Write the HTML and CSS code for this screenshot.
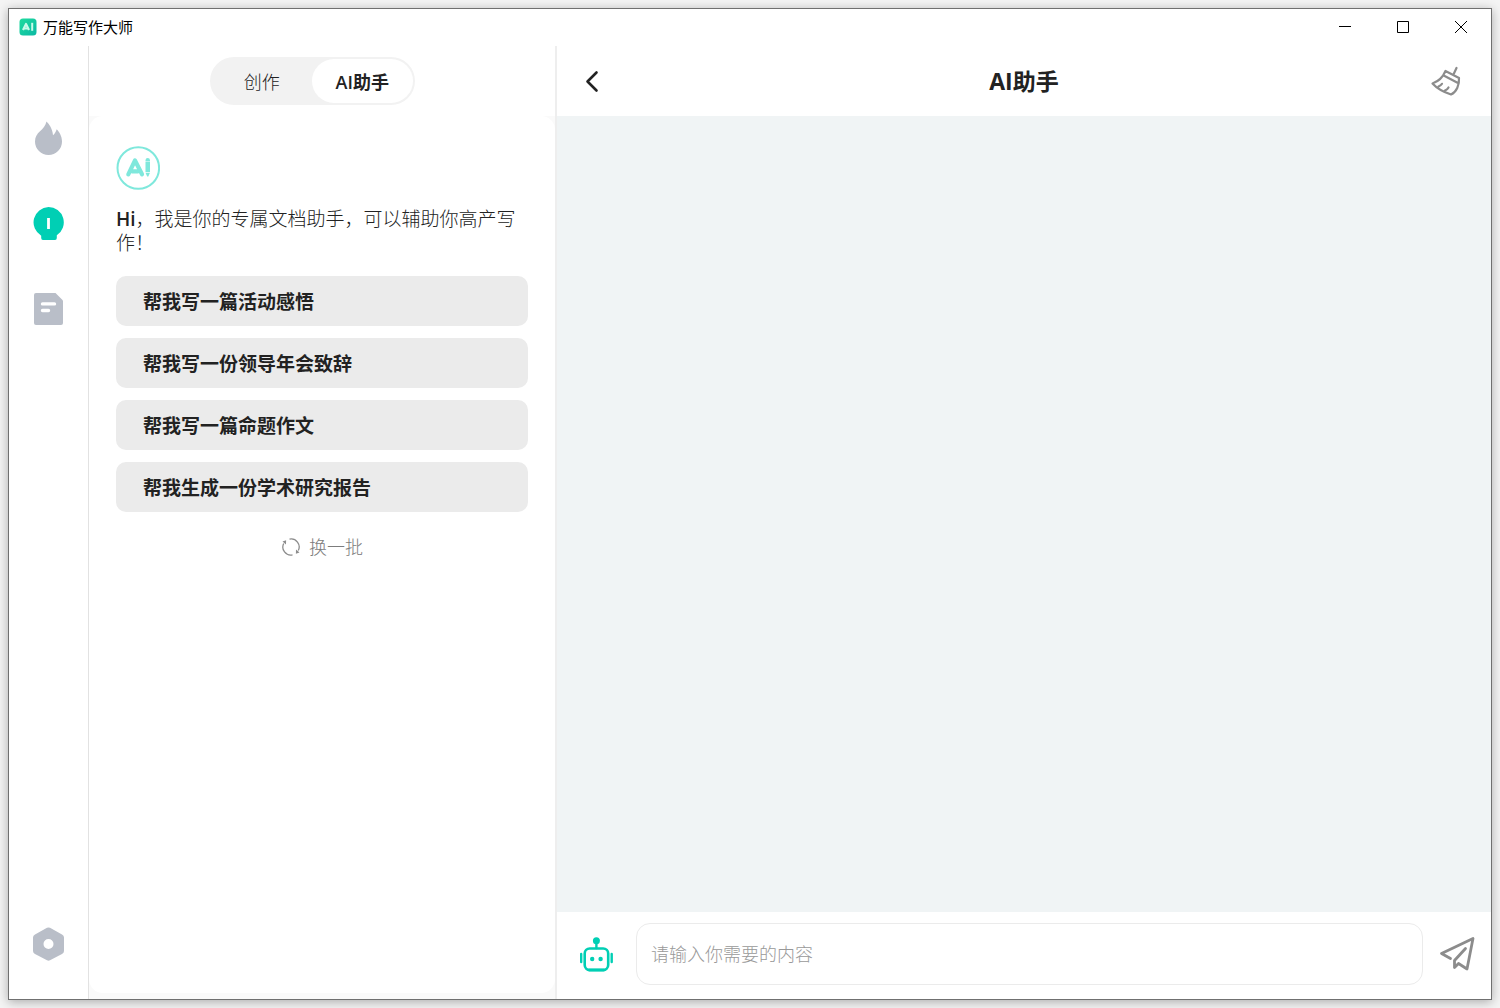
FILE: index.html
```html
<!DOCTYPE html>
<html lang="zh-CN">
<head>
<meta charset="utf-8">
<title>万能写作大师</title>
<link rel="stylesheet" href="styles.css">
</head>
<body>
<div class="window">
  <header class="titlebar">
    <svg class="app-logo" viewBox="0 0 18 18" width="18" height="18" aria-hidden="true">
      <defs><linearGradient id="logo" x1="0" y1="0" x2="1" y2="1"><stop offset="0" stop-color="#1fdc9e"/><stop offset="1" stop-color="#0bb8a4"/></linearGradient></defs>
      <rect x="0.5" y="0.5" width="17" height="17" rx="3.5" fill="url(#logo)"/>
      <path d="M4 12L7 6L10 12M5.500 10.500H9" fill="none" stroke="#c9fbea" stroke-width="2.200" stroke-linejoin="round"/>
      <path d="M13.200 4.800V12.800" stroke="#c9fbea" stroke-width="2"/>
    </svg>
    <h1 class="app-name">万能写作大师</h1>
    <div class="window-controls">
      <button class="window-btn" type="button" aria-label="最小化"><svg viewBox="0 0 12 12" width="12" height="12"><path d="M0 5.500H12"/></svg></button>
      <button class="window-btn" type="button" aria-label="最大化"><svg viewBox="0 0 12 12" width="12" height="12"><path d="M.5.500H11.500V11.500H.5Z"/></svg></button>
      <button class="window-btn" type="button" aria-label="关闭"><svg viewBox="0 0 12 12" width="12" height="12"><path d="M0 0L12 12M12 0L0 12"/></svg></button>
    </div>
  </header>

  <div class="workspace">
    <nav class="sidebar">
      <button class="nav-btn" type="button" aria-label="热门">
        <svg viewBox="0 0 32 34" width="32" height="34"><path fill="#b9bec8" d="M13.500 .5C15.600 2.500 19.500 7.500 20 14.300C22 12.800 22.800 10.500 23.700 8.300C26.200 11 29 15 29 20.500A13.400 13.400 0 0 1 2 20.500C2 16 4 13 7 10.300C10 7.500 12.400 5 13.500 .5Z"/></svg>
      </button>
      <button class="nav-btn" type="button" aria-label="AI助手" aria-current="page">
        <svg viewBox="0 0 32 34" width="32" height="34"><path fill="#00cfb4" d="M15.500 0A15.400 15.400 0 0 1 23.800 28.300V31Q23.800 33 22 33H10Q8.200 33 8.200 31V28.700A15.400 15.400 0 0 1 15.500 0Z"/><path d="M15.500 11V22" stroke="#fff" stroke-width="2.800"/></svg>
      </button>
      <button class="nav-btn" type="button" aria-label="文档">
        <svg viewBox="0 0 32 34" width="32" height="34"><path fill="#b9bec8" d="M3 0H22.500L30 7.500V30Q30 32 28 32H3Q1 32 1 30V2Q1 0 3 0Z"/><path d="M9.500 10.900H21.500M9.500 17.500H15.500" stroke="#fff" stroke-width="3.400" stroke-linecap="round"/></svg>
      </button>
      <button class="nav-btn nav-settings" type="button" aria-label="设置">
        <svg viewBox="0 0 32 34" width="32" height="34"><path fill="#b9bec8" fill-rule="evenodd" d="M14 .8Q15.500 0 17 .8L29 7.500Q31 8.600 31 10.500V24Q31 25.800 29 27L17 33.300Q15.500 34.200 14 33.300L2 27Q0 25.800 0 24V10.500Q0 8.600 2 7.500ZM15.500 12A5 5 0 1 0 15.500 22A5 5 0 1 0 15.500 12Z"/></svg>
      </button>
    </nav>

    <aside class="panel">
      <div class="panel-head">
        <div class="tabs" role="tablist">
          <button class="tab" type="button" role="tab" aria-selected="false">创作</button>
          <button class="tab tab-active" type="button" role="tab" aria-selected="true">AI助手</button>
        </div>
      </div>
      <div class="panel-back">
        <div class="panel-body">
          <svg class="avatar" viewBox="0 0 44 44" width="44" height="44" aria-hidden="true">
            <circle cx="22.300" cy="22" r="20.800" fill="none" stroke="#7fe8dc" stroke-width="2"/>
            <path d="M12.300 28.300L19 14.500L26 28.300M16 25.300H22" fill="none" stroke="#7fe8dc" stroke-width="4.200" stroke-linecap="round" stroke-linejoin="round"/>
            <path fill="#7fe8dc" d="M29.500 14.300Q29.500 12 31.700 12T34 14.300V15H29.500ZM29.500 15.500H34V26H29.500ZM29.500 26.800H34L32.300 30.500H31.200Z"/>
          </svg>
          <p class="intro"><b class="intro-hi">Hi</b>，我是你的专属文档助手，可以辅助你高产写作！</p>
          <div class="prompts">
            <button class="prompt" type="button">帮我写一篇活动感悟</button>
            <button class="prompt" type="button">帮我写一份领导年会致辞</button>
            <button class="prompt" type="button">帮我写一篇命题作文</button>
            <button class="prompt" type="button">帮我生成一份学术研究报告</button>
          </div>
          <button class="refresh" type="button">
            <svg viewBox="0 0 20 20" width="20" height="20" fill="none" stroke="#8c8c8c" stroke-width="1.300"><path d="M8.500 2.100A8 8 0 0 1 17.300 13.500M11.500 17.900A8 8 0 0 1 2.700 6.500"/><path d="M5 7.500L5.100 3.200L1.500 4.600ZM15 12.500L14.900 16.800L18.500 15.400Z" fill="#8c8c8c" stroke="none"/></svg>
            换一批
          </button>
        </div>
      </div>
    </aside>

    <main class="chat">
      <header class="chat-head">
        <button class="icon-btn" type="button" aria-label="返回"><svg viewBox="0 0 34 34" width="34" height="34"><path d="M21.500 8.500L12.500 17.500L21.500 26.500" fill="none" stroke="#222" stroke-width="2.600" stroke-linecap="round" stroke-linejoin="round"/></svg></button>
        <h2 class="chat-title">AI助手</h2>
        <button class="icon-btn icon-btn-end" type="button" aria-label="清空"><svg viewBox="0 0 34 34" width="34" height="34" fill="none" stroke="#8c8c8c" stroke-width="2.200" stroke-linecap="round" stroke-linejoin="round"><path d="M27.500 4L24.700 10M16.500 7L30 14C30.500 21 27.500 28 22 30.500C16 28.500 8 24.500 3.500 19.500C9 17.500 14 13 16.500 7ZM14.700 11.500L28.500 18.700M9.500 22.500Q12 21.500 13 19.800M16 26.500Q18.500 25.300 19.500 23.500"/></svg></button>
      </header>
      <section class="messages" aria-label="对话"></section>
      <form class="composer">
        <svg class="robot" viewBox="0 0 36 36" width="36" height="36" fill="none" stroke="#00cfb4" aria-hidden="true"><rect x="6.700" y="12.500" width="23.500" height="21.500" rx="5" stroke-width="2.600"/><path d="M18.400 5V12M3.200 18V26M33.700 18V26" stroke-width="2.400" stroke-linecap="round"/><path d="M10.500 34H26.500" stroke-width="3"/><g fill="#00cfb4" stroke="none"><circle cx="18.400" cy="4.700" r="3.500"/><circle cx="14.200" cy="23" r="2.200"/><circle cx="22.600" cy="23" r="2.200"/></g></svg>
        <input class="message-input" type="text" placeholder="请输入你需要的内容" aria-label="消息内容">
        <button class="icon-btn" type="submit" aria-label="发送"><svg viewBox="0 0 36 36" width="36" height="36" fill="none" stroke="#8c8c8c" stroke-width="2.800" stroke-linejoin="round" stroke-linecap="round"><path d="M11.500 22.500L2.500 17.500L34 2.500L28 33L19.500 27.500L15.500 31.500V24.500L26.500 12.500"/></svg></button>
      </form>
    </main>
  </div>
</div>
</body>
</html>
```
FILE: styles.css
```css
* { box-sizing: border-box; }

body {
  margin: 0;
  padding: 8px;
  min-height: 100vh;
  display: flex;
  background: #f4f4f4;
  color: #222;
  font-family: "Open Sans", "Noto Sans CJK SC", sans-serif;
  font-size: 18px;
}

button, input { font: inherit; color: inherit; }

button {
  padding: 0;
  border: 0;
  background: none;
  cursor: pointer;
}

svg { display: block; flex: none; }

.window {
  flex: 1;
  display: flex;
  flex-direction: column;
  border: 1px solid #707070;
  background: #fff;
  box-shadow: 0 2px 10px rgba(0, 0, 0, 0.3);
}

.titlebar {
  height: 37px;
  display: flex;
  align-items: center;
  padding: 0 1px 1px 10px;
  gap: 6px;
}

.app-name {
  margin: 0;
  color: #000;
  font-size: 15px;
  line-height: 20px;
  font-weight: 400;
}

.window-controls {
  height: 100%;
  margin-left: auto;
  display: flex;
}

.window-btn {
  width: 58px;
  display: flex;
  align-items: center;
  justify-content: center;
}

.window-btn path { fill: none; stroke: #000; }

.workspace {
  flex: 1;
  display: grid;
  grid-template-columns: 80px 468px 1fr;
}

.sidebar {
  display: flex;
  flex-direction: column;
  align-items: center;
  gap: 52px;
  padding: 75px 0 38px;
  border-right: 1px solid #e2e2e2;
}

.nav-settings { margin-top: auto; }

.panel {
  display: flex;
  flex-direction: column;
  border-right: 2px solid #eee;
}

.panel-head {
  height: 70px;
  display: flex;
  justify-content: center;
  align-items: center;
  padding-right: 20px;
}

.tabs {
  display: flex;
  width: 205px;
  height: 48px;
  padding: 2px;
  border-radius: 24px;
  background: #f2f2f2;
}

.tab {
  flex: 1;
  border-radius: 22px;
  font-weight: 300;
}

.tab-active {
  background: #fff;
  font-weight: 600;
}

.panel-back {
  flex: 1;
  display: flex;
  padding-bottom: 6px;
  background: #fafafa;
}

.panel-body {
  flex: 1;
  display: flex;
  flex-direction: column;
  padding: 30px 27px;
  border-radius: 14px;
  background: #fff;
}

.intro {
  margin: 17px 0 21px;
  font-size: 19px;
  line-height: 24px;
  font-weight: 300;
}

.intro-hi { font-weight: 600; }

.prompts {
  display: flex;
  flex-direction: column;
  gap: 12px;
}

.prompt {
  height: 50px;
  padding: 0 27px;
  border-radius: 10px;
  background: #ebebeb;
  font-size: 19px;
  font-weight: 700;
  text-align: left;
}

.refresh {
  align-self: center;
  display: flex;
  align-items: center;
  gap: 8px;
  margin-top: 22px;
  color: #7c7c7c;
  line-height: 26px;
  font-weight: 300;
}

.chat {
  display: flex;
  flex-direction: column;
}

.chat-head {
  height: 70px;
  display: grid;
  grid-template-columns: 1fr auto 1fr;
  align-items: center;
  padding: 0 28px 0 18px;
}

.icon-btn { justify-self: start; }

.icon-btn-end { justify-self: end; }

.chat-title {
  margin: 0 0 0 10px;
  font-size: 23px;
  line-height: 32px;
  font-weight: 700;
}

.messages {
  flex: 1;
  background: #f0f4f5;
}

.composer {
  height: 87px;
  display: flex;
  align-items: center;
  gap: 16px;
  padding: 0 16px 3px 21px;
}

.message-input {
  flex: 1;
  min-width: 0;
  height: 62px;
  margin-left: 6px;
  padding: 0 14px;
  border: 1px solid #ebebeb;
  border-radius: 14px;
  background: #fff;
  font-weight: 300;
}

.message-input::placeholder { color: #999; opacity: 1; }
```
